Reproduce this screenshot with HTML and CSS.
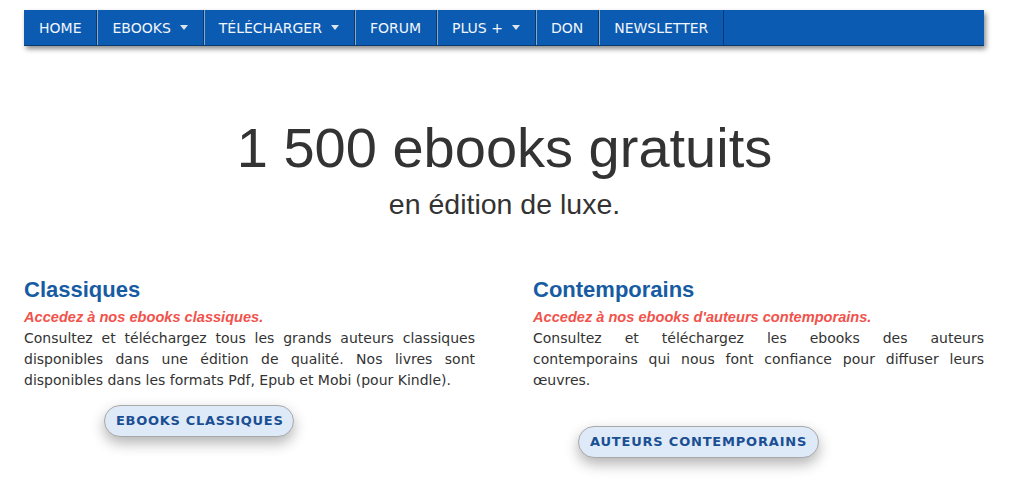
FILE: index.html
```html
<!DOCTYPE html>
<html lang="fr">
<head>
<meta charset="utf-8">
<title>Ebooks gratuits</title>
<link rel="stylesheet" href="styles.css">
</head>
<body>
<nav class="navbar">
  <ul class="menu">
    <li class="item"><a href="#">HOME</a></li>
    <li class="item"><a href="#">EBOOKS<span class="caret"></span></a></li>
    <li class="item"><a href="#">TÉLÉCHARGER<span class="caret"></span></a></li>
    <li class="item"><a href="#">FORUM</a></li>
    <li class="item"><a href="#">PLUS +<span class="caret"></span></a></li>
    <li class="item"><a href="#">DON</a></li>
    <li class="item"><a href="#">NEWSLETTER</a></li>
  </ul>
</nav>

<header class="hero">
  <h1 class="hero-title">1 500 ebooks gratuits</h1>
  <p class="hero-sub">en édition de luxe.</p>
</header>

<main class="columns">
  <section class="col">
    <h2 class="col-title">Classiques</h2>
    <p class="col-lead">Accedez à nos ebooks classiques.</p>
    <p class="col-text">Consultez et téléchargez tous les grands auteurs classiques disponibles dans une édition de qualité. Nos livres sont disponibles dans les formats Pdf, Epub et Mobi (pour Kindle).</p>
    <a class="pill pill-left" href="#">EBOOKS CLASSIQUES</a>
  </section>
  <section class="col">
    <h2 class="col-title">Contemporains</h2>
    <p class="col-lead">Accedez à nos ebooks d'auteurs contemporains.</p>
    <p class="col-text">Consultez et téléchargez les ebooks des auteurs contemporains&nbsp;qui nous font confiance pour diffuser leurs œuvres.</p>
    <a class="pill pill-right" href="#">AUTEURS CONTEMPORAINS</a>
  </section>
</main>
</body>
</html>
```

FILE: styles.css
```css
html, body {
  margin: 0;
  padding: 0;
  background: #ffffff;
}

body {
  font-family: "DejaVu Sans", Verdana, sans-serif;
  color: #333333;
  padding-top: 10px;
  padding-bottom: 40px;
}

.navbar {
  width: 960px;
  margin-left: 24px;
  height: 35px;
  background: #0b5bb2;
  border-bottom: 1px solid #08396f;
  box-shadow: 2px 3px 5px rgba(0, 0, 0, 0.45);
}

.menu {
  list-style: none;
  margin: 0;
  padding: 0;
  display: flex;
  height: 35px;
}

.item {
  display: flex;
  border-right: 1px solid #083a72;
}

.item + .item {
  border-left: 1px solid #8ea8c4;
}

.item a {
  display: flex;
  align-items: center;
  padding: 1px 15px 0 14px;
  color: #f2f5fa;
  text-decoration: none;
  font-size: 14px;
  line-height: 34px;
}

.item:first-child a {
  padding-left: 15px;
}

.caret {
  display: inline-block;
  width: 0;
  height: 0;
  margin-left: 9px;
  margin-top: -1px;
  border-left: 4px solid transparent;
  border-right: 4px solid transparent;
  border-top: 5px solid #dce4ee;
}

.hero {
  text-align: center;
  margin-top: 70px;
  padding-right: 19px;
}

.hero-title {
  margin: 0;
  font-family: "Liberation Sans", Arial, sans-serif;
  font-weight: normal;
  font-size: 56px;
  line-height: 64px;
  color: #333333;
}

.hero-sub {
  margin: 7px 0 0;
  font-family: "Liberation Sans", Arial, sans-serif;
  font-size: 28.5px;
  line-height: 34px;
  color: #333333;
}

.columns {
  width: 960px;
  margin-left: 24px;
  margin-top: 56px;
  display: grid;
  grid-template-columns: 451px 451px;
  column-gap: 58px;
}

.col {
  display: flex;
  flex-direction: column;
  align-items: flex-start;
}

.col-title {
  margin: 0;
  font-family: "Liberation Sans", Arial, sans-serif;
  font-weight: bold;
  font-size: 22px;
  line-height: 26px;
  color: #175ca3;
}

.col-lead {
  margin: 5px 0 0;
  font-family: "Liberation Sans", Arial, sans-serif;
  font-weight: bold;
  font-style: italic;
  font-size: 14.6px;
  line-height: 18px;
  color: #f1524b;
}

.col-text {
  margin: 2px 0 0;
  font-size: 14px;
  line-height: 21px;
  text-align: justify;
  color: #333333;
  align-self: stretch;
}

.pill {
  display: inline-block;
  height: 30px;
  line-height: 30px;
  padding: 0 10px 0 11px;
  border: 1px solid #a9a9a9;
  border-radius: 16px;
  background: #deeaf7;
  color: #1a4f93;
  font-weight: bold;
  font-size: 13px;
  letter-spacing: 0.7px;
  text-decoration: none;
  box-shadow: 0 6px 14px rgba(0, 0, 0, 0.3);
}

.pill-left {
  margin-top: 14px;
  margin-left: 80px;
}

.pill-right {
  margin-top: 35px;
  margin-left: 45px;
  padding: 0 11px 0 11px;
  letter-spacing: 0.8px;
}
```
